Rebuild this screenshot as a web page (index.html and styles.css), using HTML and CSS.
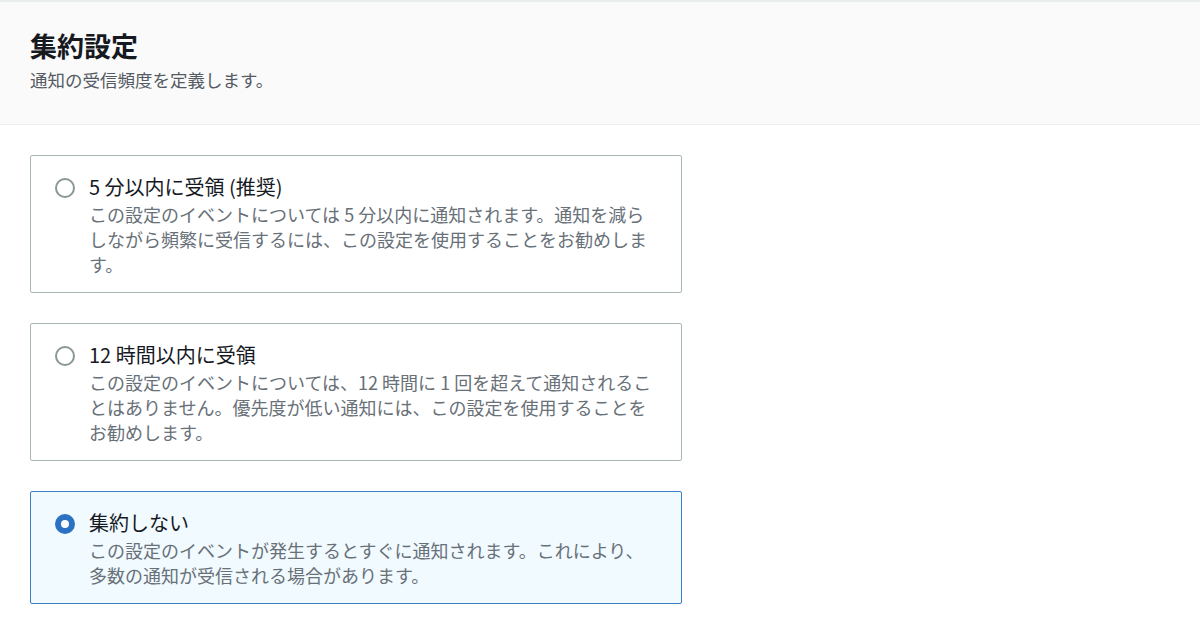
FILE: index.html
```html
<!DOCTYPE html>
<html lang="ja">
<head>
<meta charset="utf-8">
<meta name="viewport" content="width=device-width, initial-scale=1">
<link rel="stylesheet" href="styles.css">
</head>
<body>

<div class="header">
  <h2>集約設定</h2>
  <p>通知の受信頻度を定義します。</p>
</div>

<div class="options">
  <label class="tile">
    <span class="radio"></span>
    <span class="body">
      <span class="title">5 分以内に受領 (推奨)</span>
      <span class="desc">この設定のイベントについては 5 分以内に通知されます。通知を減らしながら頻繁に受信するには、この設定を使用することをお勧めします。</span>
    </span>
  </label>

  <label class="tile">
    <span class="radio"></span>
    <span class="body">
      <span class="title">12 時間以内に受領</span>
      <span class="desc">この設定のイベントについては、12 時間に 1 回を超えて通知されることはありません。優先度が低い通知には、この設定を使用することをお勧めします。</span>
    </span>
  </label>

  <label class="tile selected">
    <span class="radio"></span>
    <span class="body">
      <span class="title">集約しない</span>
      <span class="desc">この設定のイベントが発生するとすぐに通知されます。これにより、多数の通知が受信される場合があります。</span>
    </span>
  </label>
</div>

</body>
</html>
```

FILE: styles.css
```css
* {box-sizing: border-box;}
body {
  margin: 0;
  font-family: "Noto Sans CJK JP", "Noto Sans", sans-serif;
  color: #16191f;
  background: #fff;
}

.header {
  background-color: #fafafa;
  border-top: 2px solid #eaeded;
  border-bottom: 1px solid #eaeded;
  padding: 27px 30px 31px;
}
.header h2 {
  margin: 0;
  font-size: 27px;
  line-height: 34px;
  font-weight: bold;
}
.header p {
  margin: 4px 0 0;
  font-size: 17.5px;
  line-height: 26px;
  color: #545b64;
}

.options {
  padding: 30px;
  display: flex;
  flex-direction: column;
  gap: 30px;
}

.tile {
  width: 652px;
  display: flex;
  gap: 14px;
  padding: 17px 24px 15px;
  border: 1px solid #aab7b8;
  border-radius: 2px;
  cursor: pointer;
}
.tile.selected {
  background-color: #f1faff;
  border-color: #3d7fc7;
}

.radio {
  flex: none;
  width: 20px;
  height: 20px;
  margin-top: 5px;
  border: 2px solid #8a9697;
  border-radius: 50%;
  background: #fff;
}
.selected .radio {
  border: 6px solid #2c72c2;
}

.body {
  display: flex;
  flex-direction: column;
  width: 566px;
}
.title {
  font-size: 20px;
  line-height: 28px;
  color: #16191f;
}
.desc {
  margin-top: 1px;
  font-size: 18px;
  line-height: 25px;
  color: #687078;
}
```
